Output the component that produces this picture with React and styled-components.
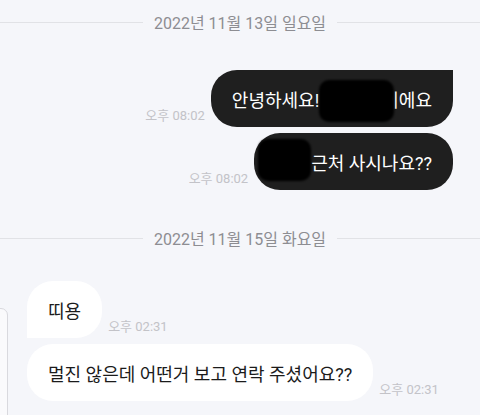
import React from "react";
import styled, { createGlobalStyle } from "styled-components";

const GlobalStyle = createGlobalStyle`
  body {
    margin: 0;
    background: #f5f6fa;
    font-family: Roboto, "Noto Sans CJK KR", sans-serif;
  }
`;

const messages = [
  { type: "date", text: "2022년 11월 13일 일요일" },
  { type: "out", id: 1, time: "오후 08:02", first: true, parts: ["안녕하세요!", "blob", "이에요"] },
  { type: "out", id: 2, time: "오후 08:02", parts: ["blob2", "근처 사시나요??"] },
  { type: "date", text: "2022년 11월 15일 화요일" },
  { type: "in", id: 3, time: "오후 02:31", first: true, parts: ["띠용"] },
  { type: "in", id: 4, time: "오후 02:31", parts: ["멀진 않은데 어떤거 보고 연락 주셨어요??"] },
];

function App() {
  return (
    <>
      <GlobalStyle />
      <Screen>
        <SidePanel />
        {messages.map((m, i) => {
          if (m.type === "date") {
            return (
              <DateRow key={i} $top={i === 0 ? 10 : 36}>
                <Line />
                <DateText>{m.text}</DateText>
                <Line />
              </DateRow>
            );
          }
          const out = m.type === "out";
          return (
            <Row key={m.id} $out={out} $first={m.first}>
              {out && <Time>{m.time}</Time>}
              <Bubble $out={out} $first={m.first}>
                {m.parts.map((p, j) =>
                  p === "blob" ? (
                    <Blob key={j} />
                  ) : p === "blob2" ? (
                    <Blob key={j} $small />
                  ) : (
                    <span key={j}>{p}</span>
                  )
                )}
              </Bubble>
              {!out && <Time>{m.time}</Time>}
            </Row>
          );
        })}
      </Screen>
    </>
  );
}

const Screen = styled.div`
  position: relative;
  height: 415px;
  overflow: hidden;
  display: flex;
  flex-direction: column;
  padding: 0 27px;
`;

const SidePanel = styled.div`
  position: absolute;
  left: -4px;
  top: 308px;
  width: 10px;
  height: 140px;
  background: #fafafc;
  border: 1px solid #d9d9de;
  border-radius: 0 7px 0 0;
`;

const DateRow = styled.div`
  display: flex;
  align-items: center;
  margin: ${(p) => p.$top}px -27px 0;
  height: 24px;
`;

const Line = styled.div`
  flex: 1;
  height: 1px;
  background: #e1e2e6;
`;

const DateText = styled.div`
  margin: 0 11px;
  font-size: 16px;
  color: #8d8d92;
`;

const Row = styled.div`
  display: flex;
  align-items: flex-end;
  justify-content: ${(p) => (p.$out ? "flex-end" : "flex-start")};
  gap: 6px;
  margin-top: ${(p) => (p.$first ? (p.$out ? 36 : 31) : 6)}px;
`;

const Bubble = styled.div`
  display: flex;
  align-items: center;
  height: 57px;
  box-sizing: border-box;
  padding: 0 21px;
  font-size: 18px;
  white-space: nowrap;
  background: ${(p) => (p.$out ? "#1f1f1f" : "#ffffff")};
  color: ${(p) => (p.$out ? "#ffffff" : "#1b1b1b")};
  border-radius: ${(p) =>
    p.$first ? (p.$out ? "26px 0 26px 26px" : "26px 26px 26px 0") : "26px"};
`;

const Blob = styled.span`
  position: relative;
  display: inline-block;
  flex-shrink: 0;
  width: ${(p) => (p.$small ? 53 : 75)}px;
  height: 42px;
  margin-left: ${(p) => (p.$small ? -17 : 0)}px;
  margin-right: ${(p) => (p.$small ? 0 : -12)}px;
  margin-top: ${(p) => (p.$small ? -4 : 4)}px;
  background: #000;
  border-radius: 10px;
  filter: blur(1px);
`;

const Time = styled.div`
  font-size: 13px;
  color: #c3c3c8;
  padding-bottom: 3px;
  white-space: nowrap;
`;

export default App;
